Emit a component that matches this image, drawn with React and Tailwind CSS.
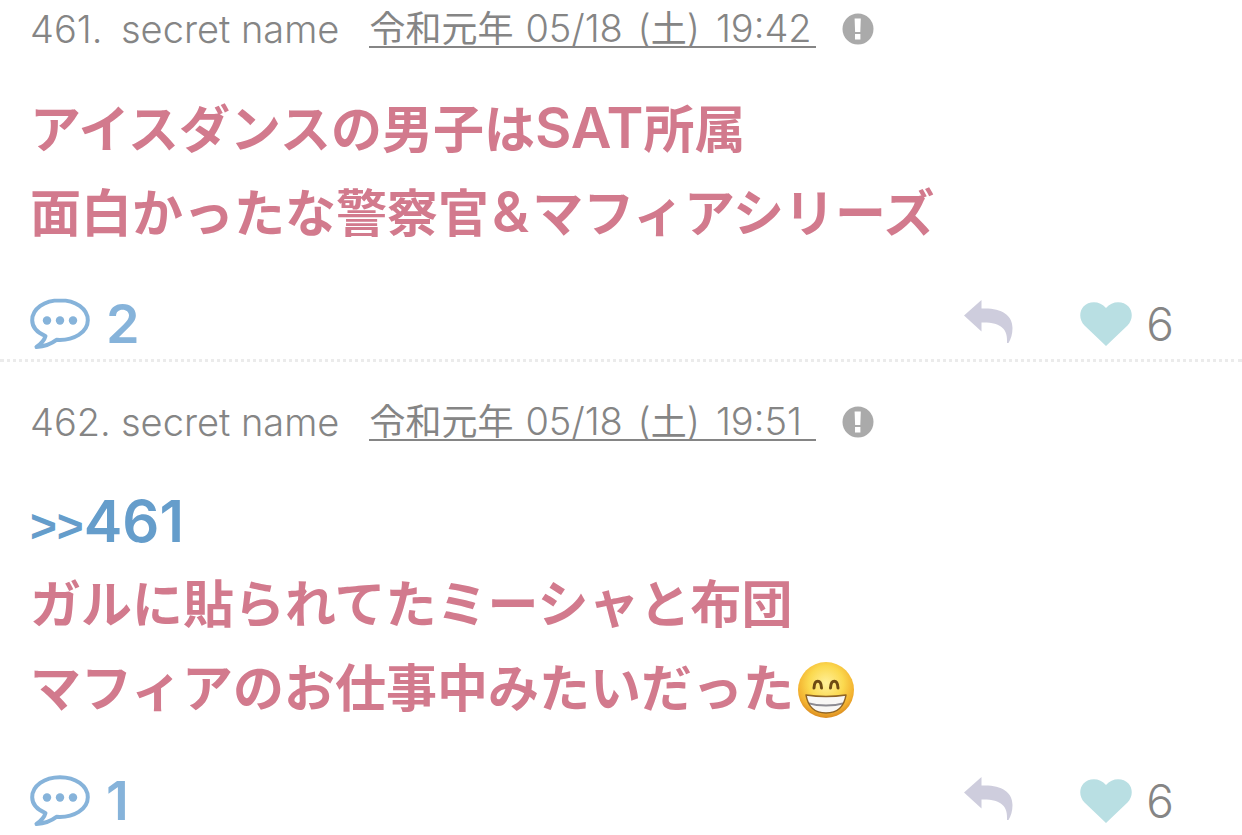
const posts = [
  {
    id: 461,
    name: 'secret name',
    era: '令和元年',
    date: '05/18',
    weekday: '土',
    time: '19:42',
    replies: 2,
    likes: 6,
    lines: [
      <>アイスダンスの男子は<Latin>SAT</Latin>所属</>,
      <>面白かったな警察官<Latin><span className="px-[3px]">&amp;</span></Latin>マフィアシリーズ</>,
    ],
  },
  {
    id: 462,
    name: 'secret name',
    era: '令和元年',
    date: '05/18',
    weekday: '土',
    time: '19:51',
    replies: 1,
    likes: 6,
    quote: 461,
    lines: [
      <>ガルに貼られてたミーシャと布団</>,
      <>マフィアのお仕事中みたいだった<GrinFace /></>,
    ],
  },
];

function Latin({ children }) {
  return <span className="text-[56px]">{children}</span>;
}

function GrinFace() {
  return (
    <svg viewBox="0 0 58 58" className="mb-1.5 ml-[3px] inline-block size-[58px] align-middle" role="img" aria-label="grinning face">
      <defs>
        <radialGradient id="face" cx="50%" cy="38%" r="62%">
          <stop offset="0" stopColor="#fff09a" />
          <stop offset="0.5" stopColor="#fbd94f" />
          <stop offset="0.82" stopColor="#f3b12f" />
          <stop offset="1" stopColor="#d98a20" />
        </radialGradient>
        <clipPath id="mouth">
          <path d="M9 34 Q29 37 49 34 C47 46 40 52 29 52 C18 52 11 46 9 34Z" />
        </clipPath>
      </defs>
      <circle cx="29" cy="29" r="28" fill="url(#face)" />
      <path d="M17 27 C17.500 18 24 18 24.500 27" fill="none" stroke="#6d4a13" strokeWidth="3" strokeLinecap="round" />
      <path d="M33.500 27 C34 18 40.500 18 41 27" fill="none" stroke="#6d4a13" strokeWidth="3" strokeLinecap="round" />
      <g clipPath="url(#mouth)">
        <rect x="8" y="32" width="42" height="21" fill="#f8f7f5" />
        <path d="M10 41 Q29 46 48 41 V43 Q29 48 10 43Z" fill="#8c8b92" />
      </g>
      <path
        d="M9 34 Q29 37 49 34 C47 46 40 52 29 52 C18 52 11 46 9 34Z"
        fill="none"
        stroke="#8f6426"
        strokeWidth="1.500"
        strokeLinejoin="round"
      />
    </svg>
  );
}

function ReportIcon() {
  return (
    <svg viewBox="0 0 32 32" className="size-8" aria-hidden="true">
      <circle cx="16" cy="16" r="15.500" fill="#aaaaaa" />
      <path d="M12.600 5.500h6.200l-.5 13.500h-5.200zM13 21h5.400v5.500h-5.400z" fill="#fff" />
    </svg>
  );
}

function CommentIcon() {
  return (
    <svg viewBox="0 0 60 52" className="h-[52px] w-[60px]" aria-hidden="true">
      <path
        d="M30 2.200C14.500 2.200 2.200 10.800 2.200 22.200C2.200 28.500 7 34.500 15.500 38C14.500 42 10 46.500 6.500 49C13.500 48.500 21 46 26.500 41.800C44 43 57.800 34 57.800 22.200C57.800 10.800 45.500 2.200 30 2.200Z"
        fill="none"
        stroke="#86b3da"
        strokeWidth="4"
        strokeLinejoin="round"
      />
      <circle cx="17" cy="22.500" r="4.200" fill="#86b3da" />
      <circle cx="30" cy="22.500" r="4.200" fill="#86b3da" />
      <circle cx="43" cy="22.500" r="4.200" fill="#86b3da" />
    </svg>
  );
}

function ReplyIcon() {
  return (
    <svg viewBox="0 0 50 44" className="mb-1 h-11 w-[50px]" aria-hidden="true">
      <path d="M0 15.500L17.500 0V8.500C36 7.500 48.500 14 48.500 28C48.500 34 47 39 44.500 43H43C44 29 37 22 17.500 22.500V31.500Z" fill="#cecddd" />
    </svg>
  );
}

function HeartIcon() {
  return (
    <svg viewBox="0 0 52 44" className="h-11 w-[52px]" aria-hidden="true">
      <path d="M26 44L4.500 23.500C-1 18 -1 9.500 3.500 4.500C9 -1.500 20 -1.500 26 6C32 -1.500 43 -1.500 48.500 4.500C53 9.500 53 18 47.500 23.500Z" fill="#b9dfe3" />
    </svg>
  );
}

function Post({ post }) {
  return (
    <article className="border-b-3 border-dotted border-[#ebebeb] pt-8 pr-[68px] pb-[9px] pl-[30px] first:pt-px last:border-0 last:pb-2">
      <header className="flex items-center text-[38px] leading-[56px] font-light text-[#858585]">
        <span className="min-w-[91px]">{post.id}.</span>
        <span>{post.name}</span>
        <a
          href={`#comment-${post.id}`}
          className="ml-[30px] flex items-baseline border-b-2 border-[#858585] leading-[34px]"
        >
          <span className="text-[36px] font-normal">{post.era}</span>
          <span className="ml-3 min-w-[112px]">{post.date}</span>
          <span>(<span className="text-[36px] font-normal">{post.weekday}</span>)</span>
          <span className="ml-4 min-w-[100px]">{post.time}</span>
        </a>
        <button type="button" aria-label="Report" className="ml-[26px]">
          <ReportIcon />
        </button>
      </header>

      <div className="mt-[29px] text-[51px] leading-[84px] font-semibold text-[#d27a8d]">
        {post.quote ? (
          <p className="h-[84px]">
            <a href={`#comment-${post.quote}`} className="text-[58px] text-[#659dcb]">
              <span className="font-['Liberation_Sans',sans-serif] text-[46px]">&gt;&gt;</span>
              {post.quote}
            </a>
          </p>
        ) : null}
        {post.lines.map((line, index) => (
          <p key={index} className="h-[84px]">{line}</p>
        ))}
      </div>

      <footer className="mt-11 flex h-[52px] items-center">
        <button type="button" className="flex items-center gap-4 text-[54px] leading-[52px] font-semibold text-[#86b3da]">
          <CommentIcon />
          {post.replies}
        </button>
        <button type="button" aria-label="Reply" className="ml-auto">
          <ReplyIcon />
        </button>
        <button type="button" className="ml-[66px] flex items-center gap-[14px] text-[46px] leading-[50px] font-light text-[#858585]">
          <HeartIcon />
          {post.likes}
        </button>
      </footer>
    </article>
  );
}

export default function App() {
  return (
    <main className="bg-white font-['Inter','Noto_Sans_CJK_JP',sans-serif]" lang="ja">
      {posts.map((post) => (
        <Post key={post.id} post={post} />
      ))}
    </main>
  );
}
